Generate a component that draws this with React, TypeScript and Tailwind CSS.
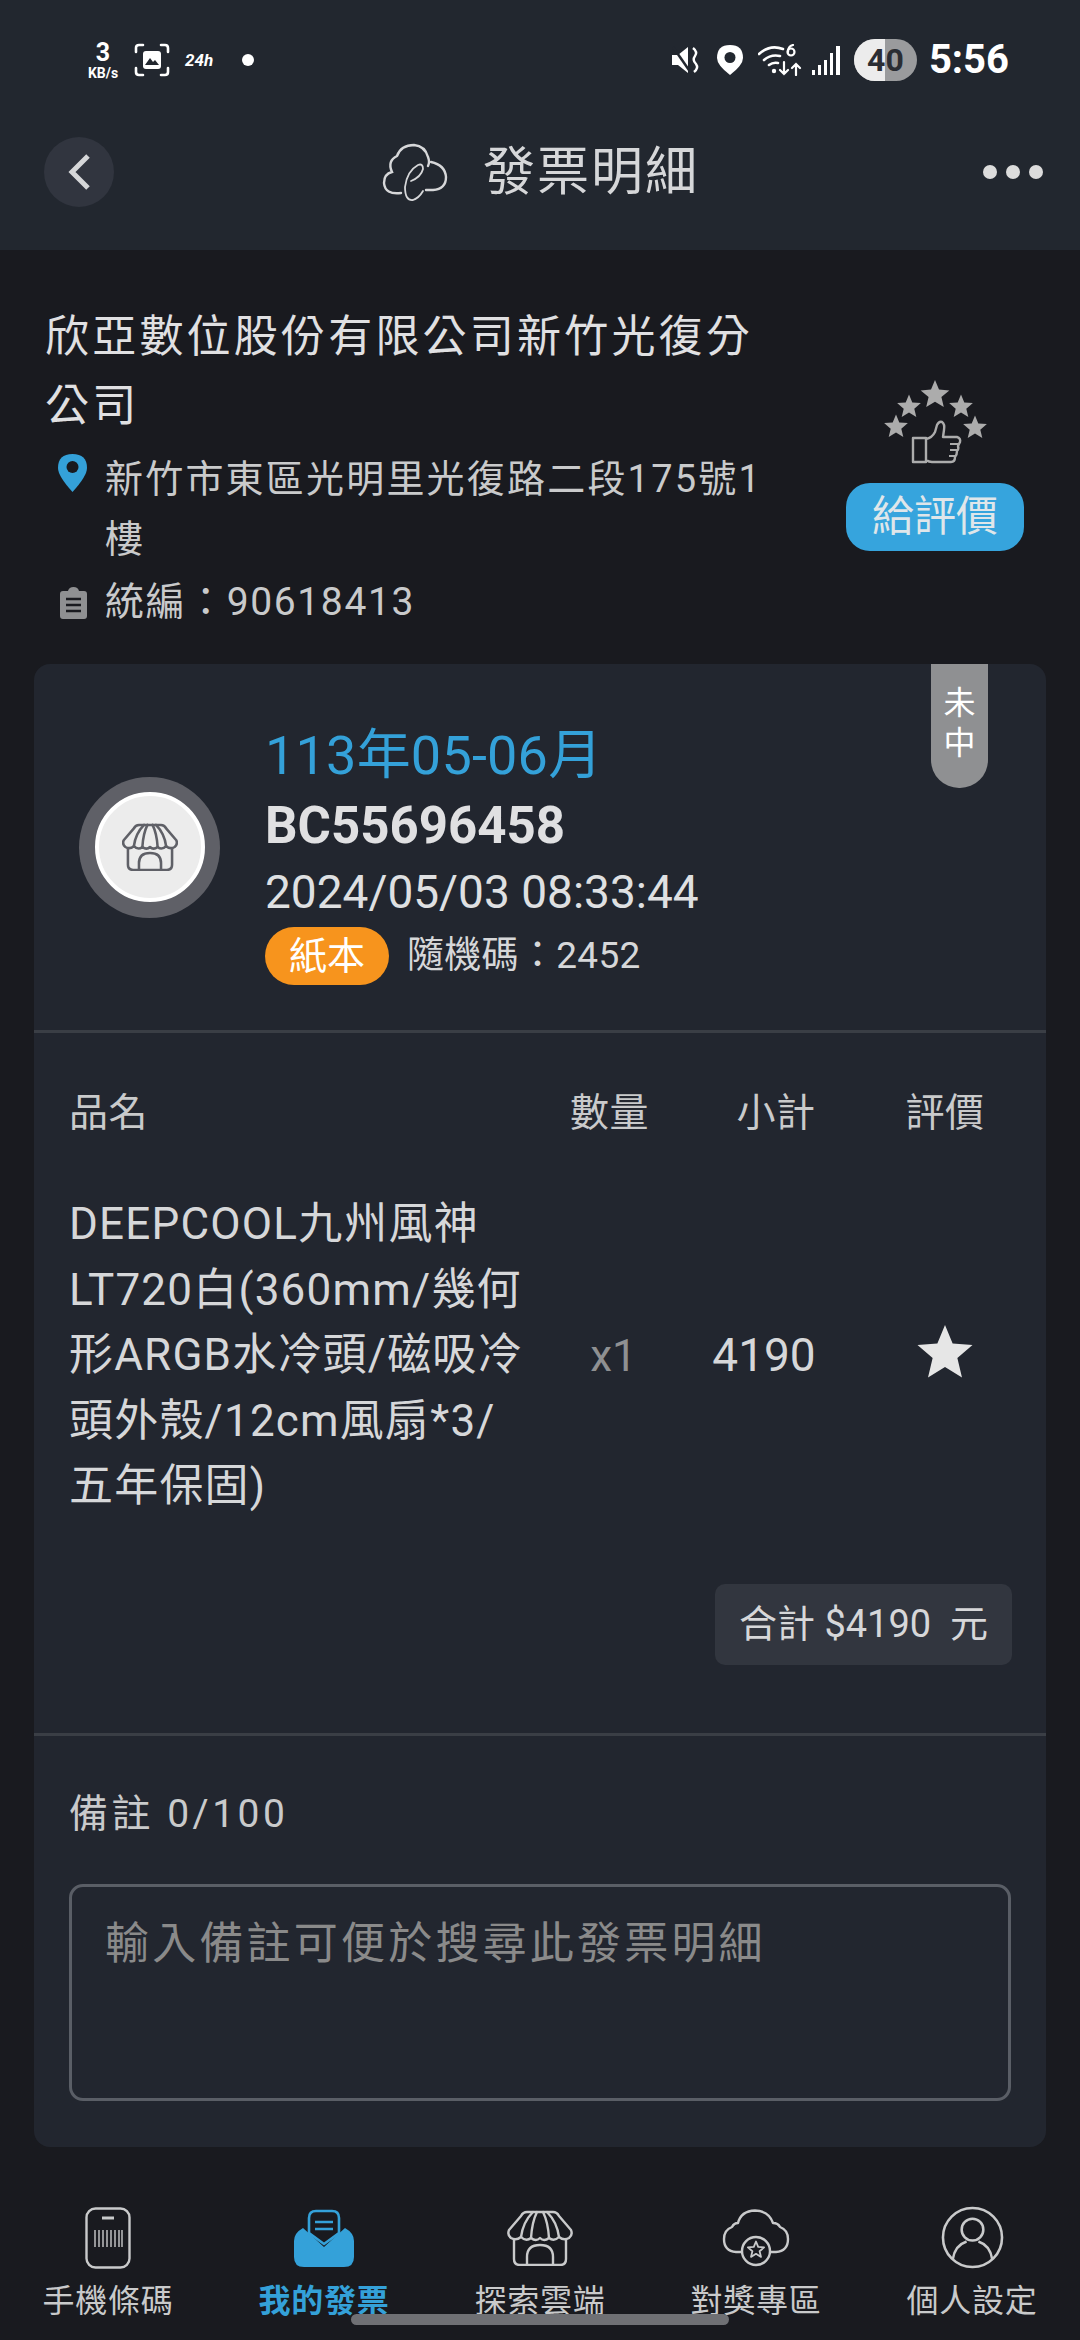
const starPoints = (cx: number, cy: number, r: number) => {
  const pts: string[] = []
  for (let i = 0; i < 10; i++) {
    const rad = i % 2 === 0 ? r : r * 0.45
    const a = (Math.PI / 5) * i - Math.PI / 2
    pts.push(`${(cx + rad * Math.cos(a)).toFixed(1)},${(cy + rad * Math.sin(a)).toFixed(1)}`)
  }
  return pts.join(' ')
}

function StoreIcon({ className, color, sw = 2.4 }: { className: string; color: string; sw?: number }) {
  return (
    <svg viewBox="0 0 66 56" className={className} fill="none" stroke={color} strokeWidth={sw} strokeLinejoin="round" strokeLinecap="round">
      <path d="M20 2 H46 Q50 2 52 6 L64 20 Q66 25 62 28 Q57 31 52 27 Q47 32 42 28 Q37 32 33 28 Q29 32 24 28 Q19 32 14 27 Q9 31 4 28 Q0 25 2 20 L14 6 Q16 2 20 2 Z" />
      <path d="M14 27 Q16 12 26 2 M24 28 Q25 12 30 2 M42 28 Q41 12 36 2 M52 27 Q50 12 40 2" />
      <path d="M7 30 V49 Q7 55 13 55 H53 Q59 55 59 49 V30" />
      <path d="M20 55 V47 Q20 35 33 35 Q46 35 46 47 V55" />
    </svg>
  )
}

function CloudE() {
  return (
    <svg viewBox="0 0 68 60" className="w-[68px] h-[60px]" fill="none" stroke="#d6d7d9" strokeWidth="2.4" strokeLinecap="round">
      <path d="M20 50 Q4 52 3 40 Q3 31 11 29 Q6 18 16 13 Q20 2 33 2 Q44 3 47 14 Q49 19 47 23" />
      <path d="M50 19 Q64 22 65 34 Q65 46 52 47 H45" />
      <path d="M30 38 Q40 34 42 26 Q42 20 37 22 Q26 28 24 44 Q24 58 32 57 Q38 55 42 48" strokeWidth="1.8" />
    </svg>
  )
}

function StatusLeft() {
  return (
    <div className="flex items-center pl-[78px] text-white">
      <div className="flex flex-col items-center w-[50px] font-bold">
        <span className="text-[25px] leading-[24px]">3</span>
        <span className="text-[14px] leading-[14px] mt-[1px]">KB/s</span>
      </div>
      <svg viewBox="0 0 36 34" className="w-[36px] h-[34px] ml-[6px]" fill="none" stroke="#fff" strokeWidth="2.6" strokeLinecap="round">
        <path d="M2 9 V5 Q2 2 5 2 H9 M27 2 H31 Q34 2 34 5 V9 M2 25 V29 Q2 32 5 32 H9 M27 32 H31 Q34 32 34 29 V25" />
        <rect x="9" y="8" width="18" height="18" rx="3" fill="#fff" stroke="none" />
        <path d="M11 22 L16 15 L19 19 L21 17 L25 22 Z" fill="#22272f" stroke="none" />
      </svg>
      <span className="ml-[15px] text-[17px] leading-none font-bold italic w-[30px]">24h</span>
      <span className="ml-[27px] w-[12px] h-[12px] rounded-full bg-white" />
    </div>
  )
}

function StatusRight() {
  return (
    <div className="flex items-center pr-[71px] text-white">
      <svg viewBox="0 0 31 28" className="w-[31px] h-[28px]" fill="#fff">
        <path d="M0 9 H6 L16 1 V27 L6 19 H0 Z" />
        <path d="M21 2 Q26 6 23 10 Q20 14 24 18 Q27 22 22 26" fill="none" stroke="#fff" strokeWidth="2.4" />
        <path d="M1 1 L19 27" stroke="#22272f" strokeWidth="2.5" />
      </svg>
      <svg viewBox="0 0 26 30" className="w-[26px] h-[30px] ml-[14px]">
        <path d="M13 0 Q26 0 26 13 Q26 20 13 30 Q0 20 0 13 Q0 0 13 0 Z" fill="#fff" />
        <circle cx="13" cy="12.5" r="5.5" fill="#22272f" />
      </svg>
      <svg viewBox="0 0 45 32" className="w-[45px] h-[32px] ml-[15px]" fill="none" stroke="#fff" strokeWidth="2.6" strokeLinecap="round">
        <path d="M1 10 Q12 0 25 5 M6 16 Q13 10 22 12 M11 21 Q15 18 20 19" />
        <circle cx="16" cy="27" r="2.2" fill="#fff" stroke="none" />
        <path d="M26 18 V30 M22 26 L26 30 L30 26 M38 31 V20 M34 24 L38 20 L42 24" strokeWidth="2.2" />
        <circle cx="33" cy="8" r="3.5" strokeWidth="2.2" />
        <path d="M30 8 Q30 2 35 1" strokeWidth="2.2" />
      </svg>
      <div className="flex items-end gap-[3px] h-[29px] ml-[9px]">
        <span className="w-[3px] h-[5px] bg-white" />
        <span className="w-[3px] h-[10px] bg-white" />
        <span className="w-[3px] h-[15px] bg-white" />
        <span className="w-[3px] h-[22px] bg-white" />
        <span className="w-[4px] h-[29px] bg-white" />
      </div>
      <div className="relative ml-[14px] w-[63px] h-[42px] rounded-[21px] overflow-hidden flex bg-[#9a9b9d] items-center justify-center">
        <span className="absolute left-0 top-0 bottom-0 w-[31px] bg-[#ececec]" />
        <span className="relative text-[#2a2d33] text-[32px] leading-none font-bold">40</span>
      </div>
      <span className="ml-[12px] text-[40px] leading-none font-bold">5:56</span>
    </div>
  )
}

function RatingArt() {
  return (
    <svg viewBox="100 20 110 90" className="w-[110px] h-[90px]">
      <polygon points={starPoints(155, 35, 15)} fill="#acacac" />
      <polygon points={starPoints(129, 47, 12.5)} fill="#acacac" />
      <polygon points={starPoints(181, 47, 12.5)} fill="#acacac" />
      <polygon points={starPoints(116, 67, 12.5)} fill="#acacac" />
      <polygon points={starPoints(195, 68, 12.5)} fill="#acacac" />
      <path
        d="M133 78 H146 V102 H133 Z M146 79 Q152 78 155 72 L157 65 Q159 61 162 62 Q165 64 164 70 L163 77 H177 Q181 78 180 82 L178 86 Q179 89 177 91 Q177 95 175 97 Q175 102 171 102 H152 Q149 102 146 100"
        fill="none"
        stroke="#acacac"
        strokeWidth="2.4"
        strokeLinejoin="round"
      />
      <path d="M170 84 H178 M170 90 H177 M169 96 H175" stroke="#acacac" strokeWidth="2" />
    </svg>
  )
}

function BottomNav() {
  const items = [
    {
      label: '手機條碼',
      icon: (
        <svg viewBox="0 0 46 62" className="w-[46px] h-[62px]" fill="none" stroke="#c9cacb" strokeWidth="2.4">
          <rect x="1.5" y="1.5" width="43" height="59" rx="9" />
          <path d="M17 11 H29" strokeWidth="3" />
          <path d="M10 23 V40 M14 23 V40 M18 23 V40 M22 23 V40 M26 23 V40 M30 23 V40 M34 23 V40 M37 23 V40" strokeWidth="1.4" />
        </svg>
      ),
    },
    {
      label: '我的發票',
      active: true,
      icon: (
        <svg viewBox="0 0 60 58" className="w-[60px] h-[58px]" fill="none">
          <path d="M15 24 V9 Q15 2 22 2 H38 Q45 2 45 9 V24 L30 35 Z" stroke="#34a1d9" strokeWidth="2.6" />
          <path d="M21 13 H39 M21 20 H39" stroke="#34a1d9" strokeWidth="2.6" />
          <path d="M9 19 L30 38 L51 19 Q60 24 60 32 V48 Q60 58 50 58 H10 Q0 58 0 48 V32 Q0 24 9 19 Z" fill="#34a1d9" />
        </svg>
      ),
    },
    { label: '探索雲端', icon: <StoreIcon className="w-[66px] h-[56px]" color="#c9cacb" /> },
    {
      label: '對獎專區',
      icon: (
        <svg viewBox="0 0 68 58" className="w-[68px] h-[58px]" fill="none" stroke="#c9cacb" strokeWidth="2.4" strokeLinejoin="round">
          <path d="M21 43 H14 Q2 42 2 30 Q2 21 10 18 Q12 14 16 14 Q19 2 33 1.5 Q47 2 51 14 Q56 14 58 18 Q66 21 66 30 Q66 42 54 43 H47" />
          <circle cx="34" cy="42" r="14" />
          <polygon points={starPoints(34, 41, 8.5)} strokeWidth="1.8" />
        </svg>
      ),
    },
    {
      label: '個人設定',
      icon: (
        <svg viewBox="0 0 64 64" className="w-[63px] h-[63px]" fill="none" stroke="#c9cacb" strokeWidth="2.6">
          <circle cx="32" cy="32" r="30" />
          <circle cx="32" cy="24" r="11" />
          <path d="M12 54 Q14 40 26 36 M52 54 Q50 40 38 36" />
        </svg>
      ),
    },
  ]
  return (
    <div className="flex pt-[59px]">
      {items.map((it) => (
        <div key={it.label} className="w-[216px] flex flex-col items-center">
          <div className="h-[64px] flex items-center justify-center">{it.icon}</div>
          <span className={`h-[46px] mt-[8px] leading-[46px] text-[32px] tracking-[0.7px] ${it.active ? 'text-[#34a1d9] font-bold' : 'text-[#c9cacb]'}`}>
            {it.label}
          </span>
        </div>
      ))}
    </div>
  )
}

export default function App() {
  return (
    <div className="relative w-[1080px] h-[2340px] overflow-hidden bg-[#191a1f] [font-family:Roboto,'Noto_Sans_CJK_TC',sans-serif]">
      {/* header */}
      <header className="h-[250px] bg-[#22272f]">
        <div className="h-[120px] flex items-center justify-between">
          <StatusLeft />
          <StatusRight />
        </div>
        <div className="relative h-[104px] flex items-center justify-center">
          <button className="absolute left-[44px] top-[17px] w-[70px] h-[70px] rounded-full bg-[#31353f] flex items-center justify-center">
            <svg viewBox="0 0 24 38" className="w-[24px] h-[38px]" fill="none" stroke="#d6d7d9" strokeWidth="5">
              <path d="M21 3 L5 19 L21 35" />
            </svg>
          </button>
          <div className="flex items-center gap-[34px] pt-[2px]">
            <CloudE />
            <h1 className="text-[52px] leading-none tracking-[2px] text-[#d6d7d9] font-normal">發票明細</h1>
          </div>
          <div className="absolute right-[37px] top-[45px] flex gap-[9px]">
            <span className="w-[14px] h-[14px] rounded-full bg-[#dcdcdc]" />
            <span className="w-[14px] h-[14px] rounded-full bg-[#dcdcdc]" />
            <span className="w-[14px] h-[14px] rounded-full bg-[#dcdcdc]" />
          </div>
        </div>
      </header>

      {/* store info */}
      <section className="flex justify-between pl-[45px] pr-[56px] pt-[53px]">
        <div className="w-[720px]">
          <h2 className="text-[44px] leading-[69px] tracking-[3.2px] text-[#e0e0e2] font-normal">欣亞數位股份有限公司新竹光復分公司</h2>
          <div className="flex mt-[8px]">
            <svg viewBox="0 0 29 38" className="w-[29px] h-[38px] ml-[13px] mt-[5px] shrink-0">
              <path d="M14.5 0 Q29 0 29 14 Q29 22 14.5 38 Q0 22 0 14 Q0 0 14.5 0 Z" fill="#34a1d9" />
              <circle cx="14.5" cy="13" r="6" fill="#191a1f" />
            </svg>
            <p className="ml-[18px] w-[660px] text-[38px] leading-[60px] tracking-[2.2px] text-[#c9cacb]">新竹市東區光明里光復路二段175號1樓</p>
          </div>
          <div className="flex items-center h-[61px] mt-[3px]">
            <svg viewBox="0 0 27 32" className="w-[27px] h-[32px] ml-[15px] shrink-0">
              <path d="M3 4 H8 Q9 0 13.5 0 Q18 0 19 4 H24 Q27 4 27 7 V29 Q27 32 24 32 H3 Q0 32 0 29 V7 Q0 4 3 4 Z" fill="#8f9092" />
              <path d="M6 12 H21 M6 18 H21 M6 24 H21" stroke="#191a1f" strokeWidth="2.4" />
            </svg>
            <p className="ml-[18px] text-[39px] leading-[61px] tracking-[1.6px] text-[#c9cacb]">統編：90618413</p>
          </div>
        </div>
        <div className="flex flex-col items-center w-[178px] mt-[77px]">
          <RatingArt />
          <button className="mt-[13px] w-[178px] h-[68px] rounded-[24px] bg-[#36a4dd] text-[42px] leading-none text-[#dfe6ea]">給評價</button>
        </div>
      </section>

      {/* invoice card */}
      <main className="relative mx-[34px] mt-[31px] rounded-[16px] bg-[#22262f] overflow-hidden">
        <div className="absolute right-[58px] top-0 w-[57px] h-[124px] rounded-b-[28px] bg-[#8f9092] flex flex-col items-center pt-[19px] text-[32px] leading-[40px] text-white">
          <span>未</span>
          <span>中</span>
        </div>

        <div className="h-[369px] flex items-center pl-[45px] border-b-[3px] border-[#3a3e45]">
          <div className="w-[141px] h-[141px] rounded-full bg-[#5f6067] flex items-center justify-center shrink-0">
            <div className="w-[110px] h-[110px] rounded-full bg-[#ececec] border-[4px] border-white flex items-center justify-center">
              <StoreIcon className="w-[56px] h-[48px]" color="#5f6067" sw={3} />
            </div>
          </div>
          <div className="ml-[45px] flex flex-col">
            <div className="h-[88px] leading-[97px] text-[54px] tracking-[0.2px] text-[#34a1d9]">113年05-06月</div>
            <div className="h-[64px] leading-[62px] text-[51px] font-bold text-[#e0e0e2]">BC55696458</div>
            <div className="h-[66px] leading-[66px] text-[46px] text-[#dfe0e2]">2024/05/03 08:33:44</div>
            <div className="h-[62px] flex items-center">
              <span className="w-[124px] h-[58px] rounded-[29px] bg-[#f7941d] text-white text-[38px] leading-[58px] text-center">紙本</span>
              <span className="ml-[18px] text-[37px] tracking-[0.3px] text-[#d6d7d9]">隨機碼：2452</span>
            </div>
          </div>
        </div>

        <div className="pt-[50px] pb-[68px] border-b-[3px] border-[#3a3e45]">
          <div className="grid grid-cols-[460px_161px_160px_190px] items-center pl-[35px] text-[39px] tracking-[0.5px] text-[#c9cacb]">
            <span className="h-[60px] leading-[60px]">品名</span>
            <span className="h-[60px] leading-[60px] text-center">數量</span>
            <span className="h-[60px] leading-[60px] text-center pl-[12px]">小計</span>
            <span className="h-[60px] leading-[60px] text-center">評價</span>
          </div>
          <div className="grid grid-cols-[460px_161px_160px_190px] items-center pl-[35px] mt-[49px]">
            <p className="text-[44px] leading-[65.5px] tracking-[1.2px] text-[#d6d7d9] whitespace-nowrap">
              DEEPCOOL九州風神
              <br />
              LT720白(360mm/幾何
              <br />
              形ARGB水冷頭/磁吸冷
              <br />
              頭外殼/12cm風扇*3/
              <br />
              五年保固)
            </p>
            <span className="text-center text-[44px] text-[#8f9092] pl-[8px]">x1</span>
            <span className="text-center text-[46px] text-[#d6d7d9] pr-[12px]">4190</span>
            <svg viewBox="0 0 60 58" className="w-[58px] h-[56px] justify-self-center -mt-[5px]">
              <polygon points={starPoints(30, 30, 30)} fill="#e6e6e6" />
            </svg>
          </div>
          <div className="flex justify-end pr-[34px] mt-[64px]">
            <div className="w-[297px] h-[81px] rounded-[10px] bg-[#32363f] text-[38px] leading-[81px] text-center text-[#d6d7d9]">合計 $4190&nbsp; 元</div>
          </div>
        </div>

        <div className="pt-[48px] pb-[46px] px-[35px]">
          <div className="h-[60px] leading-[60px] text-[39px] tracking-[3.5px] text-[#c9cacb]">備註 0/100</div>
          <div className="mt-[40px] h-[217px] rounded-[14px] border-[3px] border-[#5a5e66] pl-[33px] pt-[27px] text-[44px] leading-[60px] tracking-[3.2px] text-[#8a8a8a]">
            輸入備註可便於搜尋此發票明細
          </div>
        </div>
      </main>

      <BottomNav />

      {/* gesture bar */}
      <div className="absolute left-[351px] top-[2314px] w-[378px] h-[11px] rounded-full bg-[#6f7074]" />
    </div>
  )
}
